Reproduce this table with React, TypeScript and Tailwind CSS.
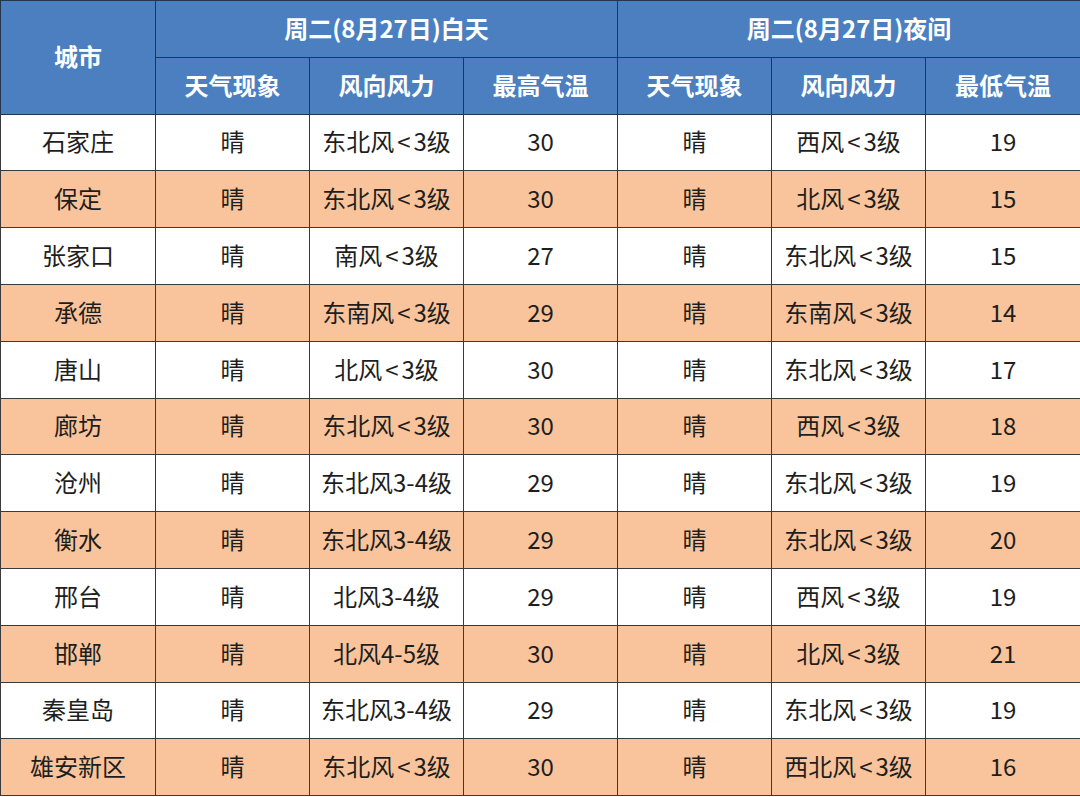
import React from "react";

const rows: string[][] = [
  ["石家庄", "晴", "东北风<3级", "30", "晴", "西风<3级", "19"],
  ["保定", "晴", "东北风<3级", "30", "晴", "北风<3级", "15"],
  ["张家口", "晴", "南风<3级", "27", "晴", "东北风<3级", "15"],
  ["承德", "晴", "东南风<3级", "29", "晴", "东南风<3级", "14"],
  ["唐山", "晴", "北风<3级", "30", "晴", "东北风<3级", "17"],
  ["廊坊", "晴", "东北风<3级", "30", "晴", "西风<3级", "18"],
  ["沧州", "晴", "东北风3-4级", "29", "晴", "东北风<3级", "19"],
  ["衡水", "晴", "东北风3-4级", "29", "晴", "东北风<3级", "20"],
  ["邢台", "晴", "北风3-4级", "29", "晴", "西风<3级", "19"],
  ["邯郸", "晴", "北风4-5级", "30", "晴", "北风<3级", "21"],
  ["秦皇岛", "晴", "东北风3-4级", "29", "晴", "东北风<3级", "19"],
  ["雄安新区", "晴", "东北风<3级", "30", "晴", "西北风<3级", "16"],
];

function Cell({ text }: { text: string }) {
  const idx = text.indexOf("<");
  if (idx === -1) return <>{text}</>;
  return (
    <>
      {text.slice(0, idx)}
      <span className="px-[3px]">&lt;</span>
      {text.slice(idx + 1)}
    </>
  );
}

export default function App() {
  return (
    <div
      className="w-[1080px] h-[797px] overflow-hidden bg-white"
      style={{ fontFamily: '"Noto Sans CJK SC", "Noto Sans", sans-serif' }}
    >
      <table className="w-[1080px] table-fixed border-collapse border border-[#2e2e2e] text-[24px] leading-none">
        <colgroup>
          <col className="w-[155px]" />
          <col className="w-[154px]" />
          <col className="w-[154px]" />
          <col className="w-[154px]" />
          <col className="w-[154px]" />
          <col className="w-[154px]" />
          <col className="w-[155px]" />
        </colgroup>
        <thead>
          <tr className="h-[56.8px] bg-[#4b7fbf] text-white font-bold">
            <th rowSpan={2} className="border border-[#23354f] font-bold pb-[2px]">
              城市
            </th>
            <th colSpan={3} className="border border-[#23354f] font-bold pb-[2px]">
              周二(8月27日)白天
            </th>
            <th colSpan={3} className="border border-[#23354f] font-bold pb-[2px]">
              周二(8月27日)夜间
            </th>
          </tr>
          <tr className="h-[56.8px] bg-[#4b7fbf] text-white font-bold">
            {["天气现象", "风向风力", "最高气温", "天气现象", "风向风力", "最低气温"].map((t, i) => (
              <th key={i} className="border border-[#23354f] font-bold pb-[2px]">
                {t}
              </th>
            ))}
          </tr>
        </thead>
        <tbody>
          {rows.map((r, ri) => (
            <tr
              key={ri}
              className={
                ri % 2 === 1
                  ? "h-[56.8px] bg-[#f9c49b] text-[#1e1e1e]"
                  : "h-[56.8px] bg-white text-[#1e1e1e]"
              }
            >
              {r.map((c, ci) => (
                <td key={ci} className="border border-[#3a3a3a] text-center pb-[2px]">
                  <Cell text={c} />
                </td>
              ))}
            </tr>
          ))}
        </tbody>
      </table>
    </div>
  );
}
